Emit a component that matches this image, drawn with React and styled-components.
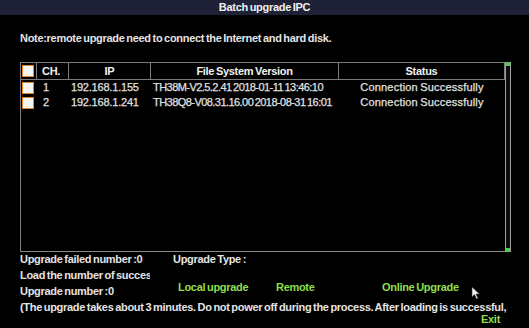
import React from 'react';
import styled, { createGlobalStyle } from 'styled-components';

const Global = createGlobalStyle`
  html, body {
    margin: 0;
    padding: 0;
    background: #000;
  }
  body {
    font-family: "Liberation Sans", Arial, sans-serif;
    color: #e4e4e4;
  }
`

const Window = styled.div`
  position: relative;
  width: 529px;
  height: 328px;
  background: #000;
  overflow: hidden;
  font-size: 11px;
  font-weight: bold;
  letter-spacing: -0.3px;
  word-spacing: -1px;
`

const TitleBar = styled.div`
  height: 15px;
  line-height: 15px;
  background: #1f2137;
  text-align: center;
  font-size: 11px;
  color: #f0f0f0;
`

const Body = styled.div`
  padding: 0 18px 0 20px;
`

const Note = styled.div`
  margin-top: 15px;
  line-height: 16px;
  height: 16px;
`

const ListBox = styled.div`
  margin-top: 16px;
  display: flex;
  width: 491px;
  height: 190px;
  box-sizing: border-box;
`

const Table = styled.div`
  flex: 1;
  border-left: 1px solid #7c7c7c;
  border-bottom: 1px solid #8a8a8a;
  border-top: 1px solid #7c7c7c;
`

const Row = styled.div`
  display: grid;
  grid-template-columns: 16px 32px 82px 188px 1fr;
  height: ${p => (p.$head ? 16 : 15)}px;
  line-height: ${p => (p.$head ? 16 : 15)}px;
  border-bottom: ${p => (p.$head ? '1px solid #7c7c7c' : 'none')};
`

const Cell = styled.div`
  white-space: nowrap;
  text-align: ${p => p.$align || 'left'};
  padding-left: ${p => p.$pad || 0}px;
  border-right: ${p => (p.$head ? '1px solid #7c7c7c' : 'none')};
  color: ${p => (p.$head ? '#f2f2f2' : '#e0e0e0')};
  font-weight: ${p => (p.$head ? 'bold' : 'normal')};
  letter-spacing: ${p => p.$ls || (p.$head ? '-0.3px' : '0')};
  -webkit-text-stroke: ${p => (p.$head ? '0' : '0.25px #e0e0e0')};
`

const Check = styled.span`
  display: inline-block;
  width: 10px;
  height: 10px;
  margin: 2px 0 0 1px;
  vertical-align: top;
  background: #f6f6f6;
  border: 1.5px solid #e98224;
`

const Scroll = styled.div`
  position: relative;
  width: 6px;
  box-sizing: border-box;
  border-left: 1px solid #a0a0a0;
  border-right: 1px solid #a0a0a0;
  background: #0c0c0c;

  &::before, &::after {
    content: '';
    position: absolute;
    left: 0;
    width: 4px;
    height: 4px;
    background: #4fc94a;
  }
  &::before { top: 0; }
  &::after { bottom: 0; }
`

const Info = styled.div`
  display: flex;
  margin-top: -1px;
`

const LeftCol = styled.div`
  width: 130px;
  overflow: hidden;
  white-space: nowrap;
`

const Line = styled.div`
  height: 16px;
  line-height: 16px;
  white-space: nowrap;
`

const RightCol = styled.div`
  padding-left: 23px;
`

const Options = styled.div`
  display: grid;
  grid-template-columns: 98px 106px auto;
  margin-top: 12px;
  padding-left: 5px;
`

const GreenBtn = styled.div`
  color: #8ddf4e;
  height: 16px;
  line-height: 16px;
  white-space: nowrap;
`

const Footer = styled.div`
  display: flex;
  justify-content: flex-end;
  padding-right: 11px;
  margin-top: -4px;
`

const Cursor = styled.svg`
  position: absolute;
  left: 471px;
  top: 286px;
`

const rows = [
  { ch: '1', ip: '192.168.1.155', ver: 'TH38M-V2.5.2.41 2018-01-11 13:46:10', st: 'Connection Successfully' },
  { ch: '2', ip: '192.168.1.241', ver: 'TH38Q8-V08.31.16.00  2018-08-31 16:01', st: 'Connection Successfully' },
]

const App = () => {
  return (
    <Window>
      <Global />
      <TitleBar>Batch upgrade IPC</TitleBar>
      <Body>
        <Note>Note:remote upgrade need to connect the Internet and hard disk.</Note>
        <ListBox>
          <Table>
            <Row $head>
              <Cell $head><Check /></Cell>
              <Cell $head $pad={5}>CH.</Cell>
              <Cell $head $align='center'>IP</Cell>
              <Cell $head $align='center'>File System Version</Cell>
              <Cell $head $align='center'>Status</Cell>
            </Row>
            {rows.map(r => (
              <Row key={r.ch}>
                <Cell><Check /></Cell>
                <Cell $pad={6}>{r.ch}</Cell>
                <Cell $pad={2} $ls='-0.2px'>{r.ip}</Cell>
                <Cell $pad={2} $ls='-0.55px'>{r.ver}</Cell>
                <Cell $align='center' $ls='0.2px'>{r.st}</Cell>
              </Row>
            ))}
          </Table>
          <Scroll />
        </ListBox>
        <Info>
          <LeftCol>
            <Line>Upgrade failed number :0</Line>
            <Line>Load the number of successful :0</Line>
            <Line>Upgrade number :0</Line>
          </LeftCol>
          <RightCol>
            <Line>Upgrade Type :</Line>
            <Options>
              <GreenBtn>Local upgrade</GreenBtn>
              <GreenBtn>Remote</GreenBtn>
              <GreenBtn>Online Upgrade</GreenBtn>
            </Options>
          </RightCol>
        </Info>
        <Line>(The upgrade takes about 3 minutes. Do not power off during the process. After loading is successful,</Line>
        <Footer>
          <GreenBtn>Exit</GreenBtn>
        </Footer>
      </Body>
      <Cursor width="10" height="14" viewBox="0 0 10 14">
        <path d="M1 1 L1 11 L3.5 8.5 L5.5 13 L7 12.3 L5 8 L8.5 8 Z" fill="#f4f4f4" stroke="#333" strokeWidth="0.6" />
      </Cursor>
    </Window>
  )
}

export default App;
